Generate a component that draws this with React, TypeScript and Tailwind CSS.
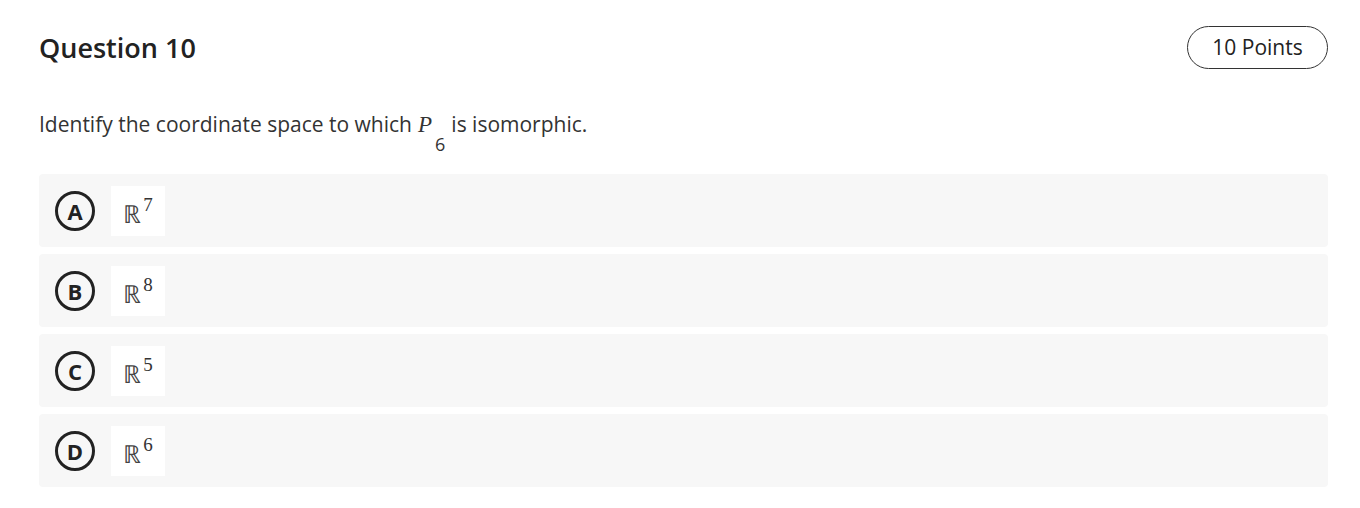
const options = [
  { letter: "A", exp: "7" },
  { letter: "B", exp: "8" },
  { letter: "C", exp: "5" },
  { letter: "D", exp: "6" },
]

export default function App() {
  return (
    <div className="w-[1360px] h-[508px] bg-white pl-[39px] pr-[32px] pt-[26px] font-['Open_Sans',sans-serif] text-[#222]">
      <div className="flex items-center justify-between">
        <h1 className="text-[27px] font-semibold leading-none">Question 10</h1>
        <div className="h-[43px] w-[141px] rounded-full border border-[#333] flex items-center justify-center text-[21px] font-medium">
          10 Points
        </div>
      </div>

      <p className="mt-[45px] text-[21px] text-[#333] leading-none flex items-start">
        <span>Identify the coordinate space to which</span>
        <span className="ml-[6px] font-['Liberation_Serif',serif] italic text-[23px] leading-none -mt-[1px]">P</span>
        <span className="text-[18px] ml-[3px] mt-[21px] leading-none">6</span>
        <span className="ml-[6px]">is isomorphic.</span>
      </p>

      <div className="mt-[21px] flex flex-col gap-[7px]">
        {options.map((o) => (
          <div key={o.letter} className="h-[73px] rounded-[4px] bg-[#f7f7f7] flex items-center pl-[16px]">
            <div className="w-[40px] h-[40px] rounded-full border-[3px] border-[#222] flex items-center justify-center text-[22px] font-bold leading-none">
              {o.letter}
            </div>
            <div className="ml-[16px] w-[54px] h-[50px] bg-white flex items-center justify-center pt-[8px]">
              <span className="font-['DejaVu_Sans',sans-serif] font-extralight text-[25px] text-[#444] leading-none">ℝ</span>
              <span className="font-['Liberation_Serif',serif] text-[19px] text-[#333] leading-none -mt-[20px] ml-[2px]">{o.exp}</span>
            </div>
          </div>
        ))}
      </div>
    </div>
  )
}
